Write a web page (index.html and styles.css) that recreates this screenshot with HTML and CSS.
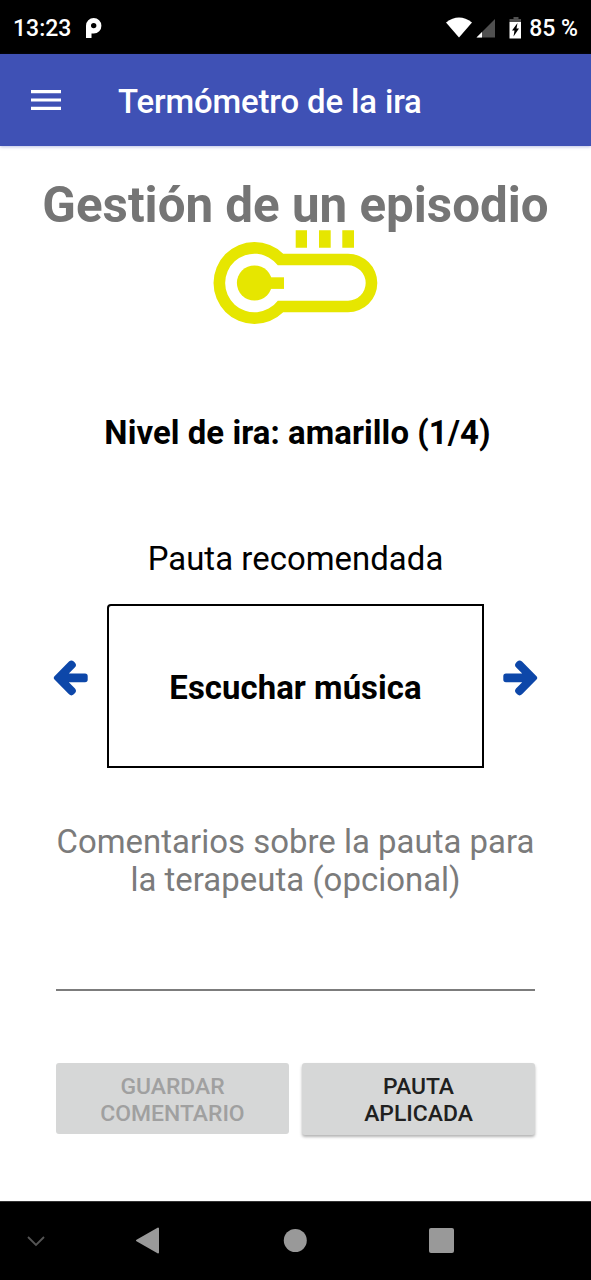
FILE: index.html
```html
<!DOCTYPE html>
<html lang="es">
<head>
<meta charset="utf-8">
<title>Termómetro de la ira</title>
<link rel="stylesheet" href="styles.css">
</head>
<body>
<div class="screen">
  <div class="status">
    <span class="clock">13:23</span>
    <svg class="carrier" width="16" height="20" viewBox="0 0 16 20"><path fill="#fff" fill-rule="evenodd" d="M0 20V7.700A7.700 7.700 0 0 1 15.400 7.700A7.700 7.700 0 0 1 7.700 15.600H5.500V20ZM7.700 4.900A2.700 2.700 0 1 0 7.700 10.300A2.700 2.700 0 1 0 7.700 4.900Z"/></svg>
    <svg class="signals" width="76" height="24" viewBox="0 0 76 24">
      <path fill="#fff" d="M0 6.500Q13 -3.500 26 6.500L13 21.500Z"/>
      <path fill="#505050" d="M49 3V21.500H30.500Z"/><path fill="#fff" d="M36 16V21.500H30.500Z"/>
      <path fill="#505050" d="M67.500 1h5v2h2.500v3H63.500V3h4z"/><path fill="#fff" d="M63.500 6H75V22.500H63.500Z"/>
      <path fill="#000" d="M71.500 7L66 14.500H68.500L67.500 20.500L73 12.500H70.500Z"/>
    </svg>
    <span class="battery">85 %</span>
  </div>
  <header class="toolbar">
    <svg class="menu" width="30" height="20" viewBox="0 0 30 20"><path fill="#fff" d="M0 0H30V3.200H0ZM0 8.400H30V11.600H0ZM0 16.800H30V20H0Z"/></svg>
    <span class="app-title">Termómetro de la ira</span>
  </header>
  <main class="content">
    <h1 class="heading">Gestión de un episodio</h1>
    <svg class="thermometer" width="166" height="96" viewBox="212 230 166 96" fill="#e6e600">
      <path d="M295.700 230.300H307V247.700H295.700ZM319 230.300H330.700V247.700H319ZM342.300 230.300H354V247.700H342.300Z"/>
      <path fill-rule="evenodd" d="M283.200 253.700H348A29.300 29.300 0 0 1 348 312.300H283.200A41 41 0 1 1 283.200 253.700ZM277.800 265.300A29.300 29.300 0 1 0 277.800 300.700H348A17.700 17.700 0 0 0 348 265.300Z"/>
      <circle cx="254.500" cy="283" r="17.600"/><path d="M265 277.300H284V288.900H265Z"/>
    </svg>
    <p class="level">Nivel de ira: amarillo (1/4)</p>
    <p class="label">Pauta recomendada</p>
    <div class="picker">
      <svg class="arrow" width="35" height="37" viewBox="0 0 35 37"><path d="M1.500 16.300L16 1.500Q18.400 -0.700 20.800 1.500L22 2.700Q24 5 22 7.300L15.800 13.500H32Q34.700 13.500 34.700 16.200V19.600Q34.700 22.300 32 22.300H15.800L22 28.500Q24 30.800 22 33.100L20.800 34.300Q18.400 36.500 16 34.300L1.500 19.500Q0 17.900 1.500 16.300Z"/></svg>
      <div class="card">Escuchar música</div>
      <svg class="arrow arrow-next" width="35" height="37" viewBox="0 0 35 37"><path d="M1.500 16.300L16 1.500Q18.400 -0.700 20.800 1.500L22 2.700Q24 5 22 7.300L15.800 13.500H32Q34.700 13.500 34.700 16.200V19.600Q34.700 22.300 32 22.300H15.800L22 28.500Q24 30.800 22 33.100L20.800 34.300Q18.400 36.500 16 34.300L1.500 19.500Q0 17.900 1.500 16.300Z"/></svg>
    </div>
    <div class="comment">Comentarios sobre la pauta para<br>la terapeuta (opcional)</div>
    <div class="actions">
      <button class="btn btn-disabled" disabled>GUARDAR<br>COMENTARIO</button>
      <button class="btn">PAUTA<br>APLICADA</button>
    </div>
  </main>
  <nav class="navbar">
    <svg width="591" height="78" viewBox="0 0 591 78" fill="#999">
      <path d="M28 35L36 43L44 35" fill="none" stroke="#555" stroke-width="1.800"/>
      <path d="M137 38.500L158 26.500V50.500Z" stroke="#999" stroke-width="2" stroke-linejoin="round"/>
      <circle cx="295.300" cy="38.500" r="11.500"/>
      <rect x="429" y="26" width="25" height="25" rx="2"/>
    </svg>
  </nav>
</div>
</body>
</html>
```
FILE: styles.css
```css
* { box-sizing: border-box; }
body { margin: 0; background: #fff; font-family: Roboto, sans-serif; color: #000; }
p, h1 { margin: 0; white-space: nowrap; }
svg { display: block; flex: none; }
.screen { width: 591px; height: 1280px; display: flex; flex-direction: column; overflow: hidden; }
.status { height: 54px; flex: none; background: #000; color: #fff; display: flex; align-items: center; padding: 2px 13px 0; font-size: 23px; font-weight: 500; white-space: nowrap; }
.clock { width: 73px; }
.signals { margin-left: auto; margin-right: 7px; }
.toolbar { height: 92px; flex: none; background: #3f51b5; color: #fff; display: flex; align-items: center; padding-left: 31px; box-shadow: 0 1px 3px rgba(63, 81, 181, .35); }
.app-title { margin-left: 57px; padding-top: 3px; font-size: 32.900px; font-weight: 500; letter-spacing: -0.120px; white-space: nowrap; }
.content { height: 1055px; flex: none; display: flex; flex-direction: column; align-items: center; padding-top: 30px; }
.heading { height: 54px; line-height: 58px; font-size: 49.300px; font-weight: 700; color: #757575; }
.thermometer { margin-right: 1px; }
.level { margin-top: 88px; margin-left: 4px; line-height: 38px; font-size: 32.900px; font-weight: 700; letter-spacing: 0.070px; }
.label { margin-top: 88px; line-height: 38px; font-size: 32.900px; letter-spacing: 0.040px; }
.picker { margin-top: 26px; width: 485px; display: flex; align-items: center; justify-content: space-between; }
.card { width: 377px; height: 164px; border: 2px solid #000; border-top-left-radius: 4px; display: flex; align-items: center; justify-content: center; padding-top: 3px; font-size: 32.900px; font-weight: 700; letter-spacing: 0.050px; }
.arrow { margin-bottom: 16px; fill: #0d47a9; }
.arrow-next { transform: scaleX(-1); }
.comment { margin-top: 54px; width: 479px; height: 169px; padding-top: 0.500px; border-bottom: 2px solid #7c7c7c; text-align: center; white-space: nowrap; line-height: 38.500px; font-size: 32.900px; letter-spacing: 0.030px; color: #7b7b7b; }
.actions { margin-top: 72px; display: flex; gap: 13px; }
.btn { width: 233px; height: 72px; border: 0; border-radius: 3px; background: #d6d7d7; color: #202020; font: 500 22.900px/27px Roboto, sans-serif; padding: 2px 0 0; box-shadow: 0 2px 3px rgba(0, 0, 0, .3); }
.btn-disabled { height: 71px; color: #a0a0a0; box-shadow: none; }
.navbar { height: 79px; flex: none; background: #000; border-top: 1px solid #333; }
```
